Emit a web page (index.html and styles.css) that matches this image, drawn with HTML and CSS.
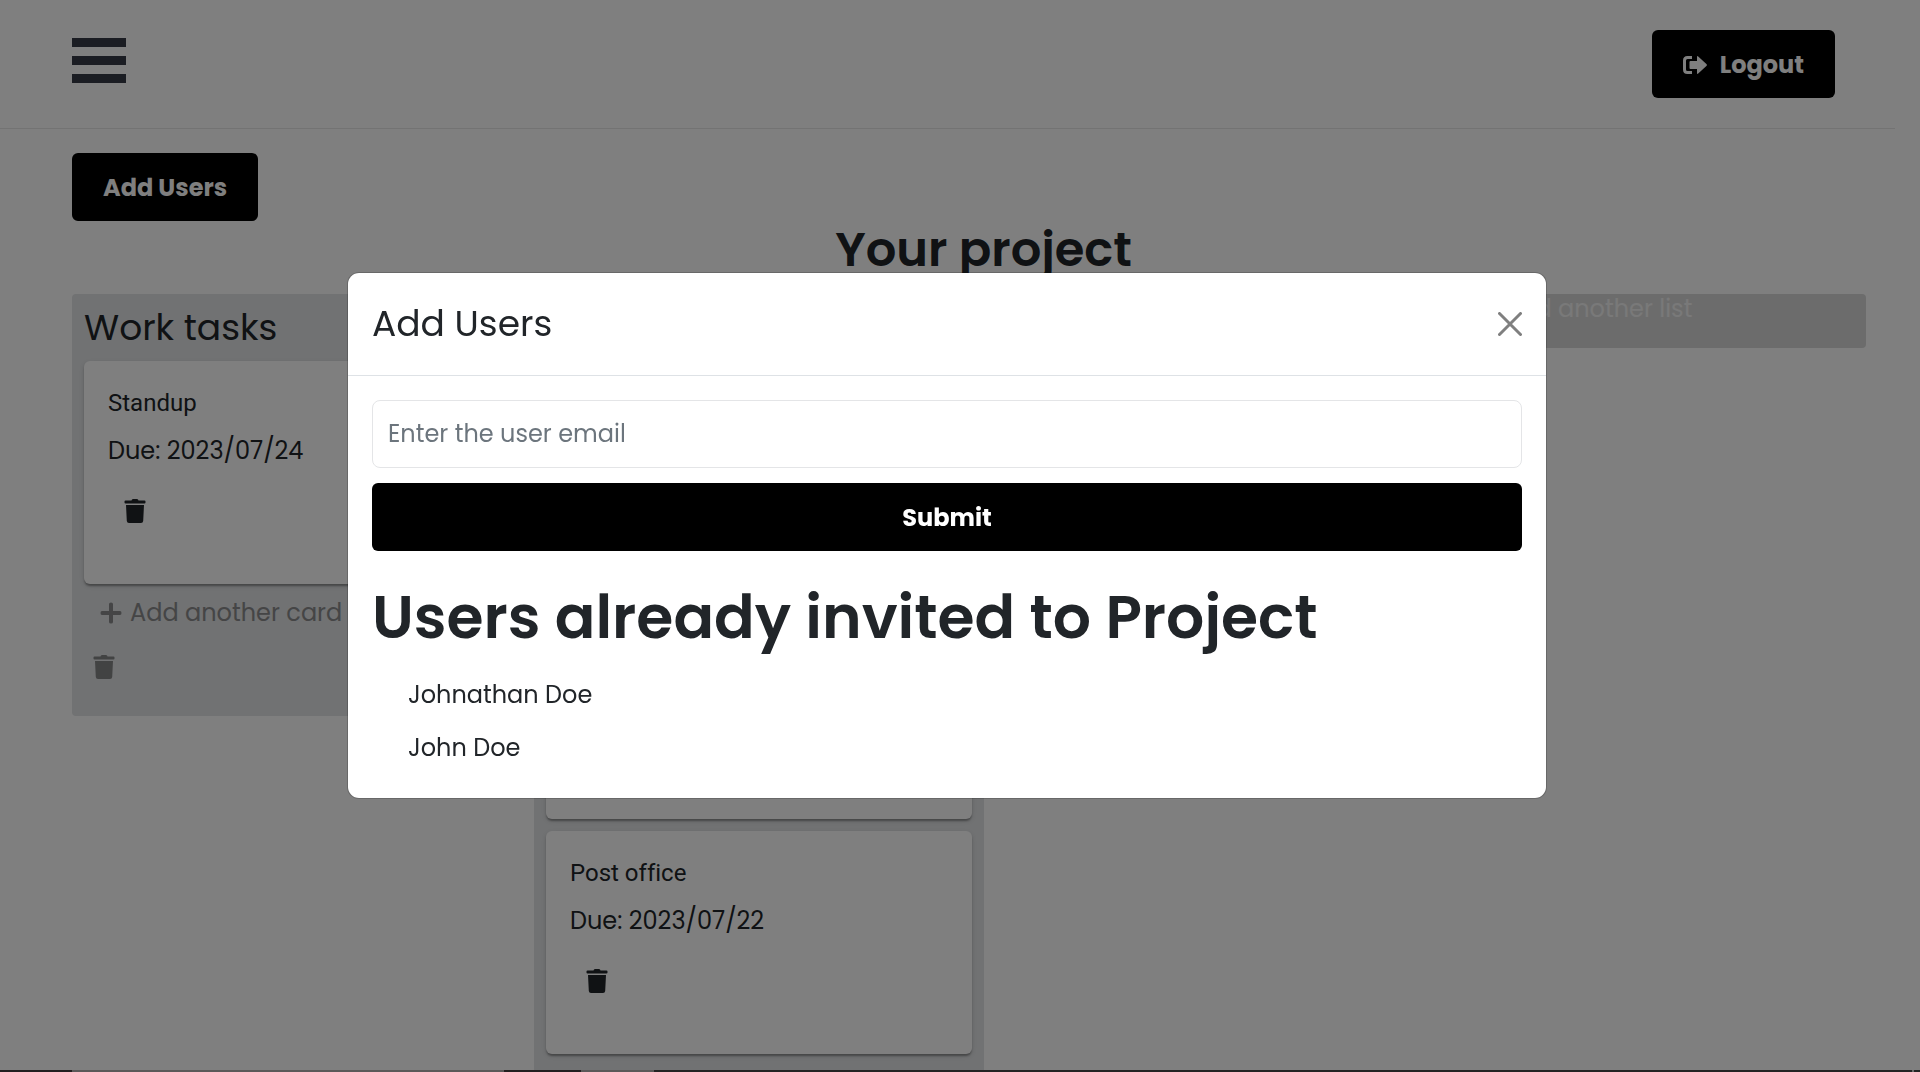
FILE: index.html
```html
<!DOCTYPE html>
<html lang="en">
<head>
<meta charset="utf-8">
<meta name="viewport" content="width=device-width, initial-scale=1">
<title>Your project</title>
<link rel="stylesheet" href="styles.css">
</head>
<body>
<svg class="symbols" aria-hidden="true">
  <symbol id="trash" viewBox="0 0 22 24">
    <path d="M7.500 1.500 8 .6Q8.300 0 9 0h4q.7 0 1 .6l.5.9h6q1 0 1 1v1q0 1-1 1h-19q-1 0-1-1v-1q0-1 1-1zM2 6h18l-.8 15.900q-.2 2.100-2.200 2.100H5q-2 0-2.200-2.100z"/>
  </symbol>
  <symbol id="plus" viewBox="0 0 22 22">
    <path d="M9 2q0-1.500 2-1.500T13 2v7h7q1.500 0 1.500 2T20 13h-7v7q0 1.500-2 1.500T9 20v-7H2q-1.500 0-1.500-2T2 9h7z"/>
  </symbol>
</svg>

<div class="page">
  <header class="topbar">
    <button class="burger" type="button" aria-label="Menu"><span></span><span></span><span></span></button>
    <button class="btn btn-logout" type="button">
      <svg class="icon-logout" viewBox="0 0 24 18" aria-hidden="true">
        <path d="M9 0v3H4.500Q3 3 3 4.500v9Q3 15 4.500 15H9v3H4.500Q0 18 0 13.500v-9Q0 0 4.500 0zM14 1q0-1.500 1.200-.5l8.200 7.600q1 .9 0 1.800l-8.200 7.600q-1.200 1-1.200-.5v-4H7.500q-1 0-1-1V6q0-1 1-1H14z"/>
      </svg>
      Logout
    </button>
  </header>

  <main class="board">
    <button class="btn" type="button">Add Users</button>
    <h1 class="board-title">Your project</h1>
    <div class="lists">
      <section class="list">
        <h2 class="list-title">Work tasks</h2>
        <article class="card">
          <p class="card-name">Standup</p>
          <p class="card-due">Due: 2023/07/24</p>
          <button class="icon-btn" type="button" aria-label="Delete card"><svg class="icon-trash" aria-hidden="true"><use href="#trash"/></svg></button>
        </article>
        <button class="add-card" type="button"><svg class="icon-plus" aria-hidden="true"><use href="#plus"/></svg>Add another card</button>
        <button class="delete-list" type="button" aria-label="Delete list"><svg class="icon-trash" aria-hidden="true"><use href="#trash"/></svg></button>
      </section>
      <section class="list">
        <h2 class="list-title"></h2>
        <article class="card"></article>
        <article class="card"></article>
        <article class="card">
          <p class="card-name">Post office</p>
          <p class="card-due">Due: 2023/07/22</p>
          <button class="icon-btn" type="button" aria-label="Delete card"><svg class="icon-trash" aria-hidden="true"><use href="#trash"/></svg></button>
        </article>
        <button class="delete-list" type="button" aria-label="Delete list"><svg class="icon-trash" aria-hidden="true"><use href="#trash"/></svg></button>
      </section>
      <button class="add-list" type="button"><svg class="icon-plus" aria-hidden="true"><use href="#plus"/></svg>Add another list</button>
    </div>
  </main>
</div>

<div class="backdrop">
  <div class="modal" role="dialog" aria-modal="true" aria-labelledby="modal-title">
    <div class="modal-header">
      <h2 class="modal-title" id="modal-title">Add Users</h2>
      <button class="close" type="button" aria-label="Close">
        <svg viewBox="0 0 24 24" aria-hidden="true"><path d="M1.500 1.500l21 21M22.500 1.500l-21 21"/></svg>
      </button>
    </div>
    <div class="modal-body">
      <form class="invite">
        <input class="field" type="email" placeholder="Enter the user email" aria-label="User email">
        <button class="btn" type="submit">Submit</button>
      </form>
      <h1 class="invited-title">Users already invited to Project</h1>
      <ul class="invited">
        <li>Johnathan Doe</li>
        <li>John Doe</li>
      </ul>
    </div>
  </div>
</div>
<div class="bottom-strip"></div>
</body>
</html>
```

FILE: styles.css
```css
*,
*::before,
*::after {
  box-sizing: border-box;
}

body {
  margin: 0;
  height: 100vh;
  overflow: hidden;
  background: #fff;
  color: #212529;
  font: 400 24px/36px Poppins, Inter, sans-serif;
}

h1, h2, p, ul {
  margin: 0;
  padding: 0;
}

button, input {
  margin: 0;
  font: inherit;
  color: inherit;
}

button {
  border: 0;
  background: none;
  cursor: pointer;
}

svg {
  display: block;
  fill: currentColor;
}

.symbols {
  position: absolute;
  width: 0;
  height: 0;
}

.page {
  padding-right: 25px;
}

.topbar {
  display: flex;
  align-items: flex-start;
  justify-content: space-between;
  padding: 30px 60px 30px 72px;
  border-bottom: 1px solid #e7e7e7;
}

.burger {
  display: flex;
  flex-direction: column;
  gap: 9px;
  width: 54px;
  margin-top: 8px;
  padding: 0;
}

.burger span {
  height: 9px;
  background: #373a47;
}

.btn {
  height: 68px;
  padding: 2px 31px 0;
  border-radius: 6px;
  background: #000;
  color: #fff;
  font-weight: 700;
}

.btn-logout {
  display: flex;
  align-items: center;
  gap: 13px;
}

.icon-logout {
  width: 24px;
  height: 18px;
}

.board {
  padding: 24px 0 0 72px;
}

.board-title {
  font-size: 48px;
  line-height: 58px;
  font-weight: 600;
  text-align: center;
}

.lists {
  display: grid;
  grid-template-columns: repeat(3, 450fr) 408fr;
  column-gap: 12px;
  align-items: start;
  margin-top: 15px;
  padding-right: 29px;
}

.list {
  display: flex;
  flex-direction: column;
  align-items: flex-start;
  gap: 12px;
  padding: 12px;
  border-radius: 4px;
  background: #e2e4e6;
}

.list-title {
  height: 43px;
  font-size: 36px;
  line-height: 43px;
  font-weight: 400;
}

.card {
  width: 100%;
  min-height: 223px;
  padding: 24px;
  border-radius: 6px;
  background: #fff;
  box-shadow: 0 3px 2px -1px rgba(0, 0, 0, .2), 0 2px 2px rgba(0, 0, 0, .14), 0 2px 5px rgba(0, 0, 0, .12);
}

.card-name {
  font-family: Roboto, sans-serif;
  font-variant-ligatures: none;
}

.card-due {
  margin-top: 12px;
}

.icon-btn {
  margin-top: 30px;
  padding: 0 16px;
}

.icon-trash {
  width: 22px;
  height: 24px;
}

.icon-plus {
  flex: none;
  width: 22px;
  height: 22px;
}

.add-card {
  display: flex;
  align-items: center;
  gap: 8px;
  padding: 0 16px;
  color: #8a8b8c;
  line-height: 34px;
}

.delete-list {
  margin: 13px 0 25px;
  padding: 0 9px;
  color: #858687;
}

.add-list {
  grid-column: 4;
  display: flex;
  align-items: flex-start;
  gap: 8px;
  height: 54px;
  padding: 0 15px;
  border-radius: 4px;
  background: #d9d9d9;
  color: #f2f2f2;
  line-height: 30px;
}

.backdrop {
  position: fixed;
  inset: 0;
  display: flex;
  align-items: center;
  justify-content: center;
  padding: 0 26px 2px 0;
  background: rgba(0, 0, 0, .5);
}

.modal {
  width: 1200px;
  max-width: 100%;
  border: 1px solid rgba(0, 0, 0, .18);
  border-radius: 12px;
  background: #fff;
  background-clip: padding-box;
}

.modal-header {
  display: flex;
  align-items: center;
  justify-content: space-between;
  padding: 24px;
  border-bottom: 1px solid #dee2e6;
}

.modal-title {
  font-size: 36px;
  line-height: 54px;
  font-weight: 400;
}

.close {
  padding: 0;
  color: #7f7f7f;
}

.close svg {
  width: 24px;
  height: 24px;
  fill: none;
  stroke: currentColor;
  stroke-width: 3px;
  stroke-linecap: round;
}

.modal-body {
  padding: 24px 24px 32px;
}

.invite {
  display: flex;
  flex-direction: column;
  gap: 15px;
}

.field {
  width: 100%;
  height: 68px;
  padding: 0 15px;
  border: 1px solid #e4e5e7;
  border-radius: 8px;
  background: #fff;
}

.field::placeholder {
  color: #6c757d;
  opacity: 1;
}

.invited-title {
  margin: 30px 0 24px;
  font-size: 60px;
  line-height: 72px;
  font-weight: 600;
}

.invited {
  display: flex;
  flex-direction: column;
  gap: 17px;
  padding-left: 36px;
  list-style: none;
}

/* edge of the panel docked under the page */
.bottom-strip {
  position: fixed;
  inset: auto 0 0;
  height: 2px;
  background: linear-gradient(90deg, #231f20 72px, #5b5959 72px 504px, #231f20 504px 581px, #5b5959 581px 654px, #242424 654px calc(100% - 8px), #6b6b6b calc(100% - 8px) calc(100% - 6px), #242424 calc(100% - 6px));
}
```
